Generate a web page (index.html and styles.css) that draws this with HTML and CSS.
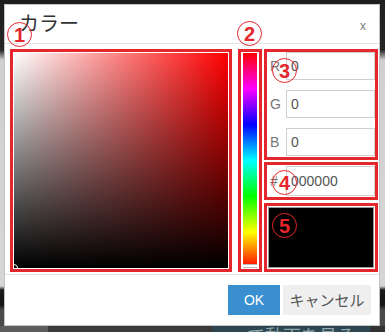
FILE: index.html
```
<!DOCTYPE html>
<html lang="ja">
<head>
<meta charset="utf-8">
<title>カラー</title>
<link rel="stylesheet" href="styles.css">
</head>
<body>
<div class="dialog">
  <div class="header">
    <span class="title">カラー</span>
    <span class="close">x</span>
  </div>
  <div class="content">
    <div class="picker">
      <div class="sat-frame mark">
        <div class="sat"><span class="sat-cursor"></span></div>
      </div>
      <div class="hue-frame mark">
        <div class="hue"><span class="hue-marker"></span></div>
      </div>
      <div class="side">
        <div class="rgb mark">
          <label class="row"><span class="lbl">R</span><input class="field" value="0"></label>
          <label class="row"><span class="lbl">G</span><input class="field" value="0"></label>
          <label class="row"><span class="lbl">B</span><input class="field" value="0"></label>
        </div>
        <div class="hex mark">
          <label class="row hex-row"><span class="lbl">#</span><input class="field" value="000000"></label>
        </div>
        <div class="preview-frame mark">
          <div class="preview"></div>
        </div>
      </div>
    </div>
  </div>
  <div class="footer">
    <button class="btn ok">OK</button>
    <button class="btn cancel">キャンセル</button>
  </div>
  <span class="badge b1">1</span>
  <span class="badge b2">2</span>
  <span class="badge b3">3</span>
  <span class="badge b4">4</span>
  <span class="badge b5">5</span>
</div>
<div class="below">
  <span class="seg s1"></span>
  <span class="seg s2"></span>
  <span class="seg s3">で動画を見る</span>
  <span class="seg s4"></span>
</div>
</body>
</html>
```
FILE: styles.css
```
html, body {
  margin: 0;
  padding: 0;
}
body {
  width: 385px;
  height: 332px;
  overflow: hidden;
  font-family: "Liberation Sans", "Noto Sans CJK JP", sans-serif;
  background: linear-gradient(to bottom,
    #1e1e1e 0, #262626 50px, #cfcfcf 60px, #d6d6d6 286px,
    #1a1a1a 290px, #151515 305px, #4a4a4a 310px, #4a4a4a 100%);
}

.dialog {
  position: relative;
  box-sizing: border-box;
  width: 376px;
  height: 322px;
  margin: 4px 0 0 4px;
  background: #fff;
  border: 1px solid #c4c4c4;
  display: flex;
  flex-direction: column;
}

.header {
  border-bottom: 1px solid #e5e5e5;
  display: flex;
  align-items: center;
  justify-content: space-between;
  padding: 0 13px 3px 14px;
  box-sizing: content-box;
  height: 35px;
}
.title {
  font-family: "Noto Sans CJK JP", sans-serif;
  font-size: 20px;
  line-height: 24px;
  color: #333;
}
.close {
  font-family: "Liberation Sans", sans-serif;
  font-size: 12px;
  line-height: 12px;
  color: #7a7a7a;
  margin-top: 6px;
}

.content {
  padding: 5px 1px 2px 5px;
}
.picker {
  display: flex;
  height: 223px;
}
.mark {
  box-sizing: border-box;
  border: 3px solid #e5262c;
  background: #fff;
}

.sat-frame {
  width: 222px;
  height: 223px;
  padding: 1px;
}
.sat {
  position: relative;
  width: 100%;
  height: 100%;
  overflow: hidden;
  background:
    linear-gradient(to top, #000, rgba(0,0,0,0)),
    linear-gradient(to right, #fff, #f00);
}
.sat-cursor {
  position: absolute;
  left: -4px;
  bottom: -4px;
  width: 6px;
  height: 6px;
  border: 1px solid #fff;
  border-radius: 50%;
}

.hue-frame {
  width: 24px;
  height: 223px;
  margin-left: 6px;
  padding: 1px 2px;
}
.hue {
  position: relative;
  width: 100%;
  height: 100%;
  background: linear-gradient(to bottom,
    #f00 0%, #f0f 16.6%, #00f 33.3%, #0ff 50%, #0f0 66.6%, #ff0 83.3%, #f00 100%);
}
.hue-marker {
  position: absolute;
  left: 0;
  right: 0;
  bottom: 0;
  height: 2px;
  background: #fff;
  border-top: 1px solid #bbb;
  border-bottom: 1px solid #bbb;
}

.side {
  width: 114px;
  margin-left: 2px;
  display: flex;
  flex-direction: column;
}
.rgb {
  height: 111px;
  display: grid;
  grid-template-rows: 28px 28px 28px;
  row-gap: 10px;
  padding-bottom: 1px;
}
.row {
  display: grid;
  grid-template-columns: 19px 1fr;
  align-items: center;
}
.lbl {
  padding-left: 3px;
  font-size: 14px;
  color: #777;
}
.field {
  box-sizing: border-box;
  width: 100%;
  min-width: 0;
  height: 28px;
  margin: 0;
  padding: 0 4px;
  border: 1px solid #cfcfcf;
  border-radius: 0;
  font-family: "Liberation Sans", sans-serif;
  font-size: 14px;
  color: #555;
  background: #fff;
  outline: none;
}

.hex {
  height: 38px;
  margin-top: 2px;
  padding: 1px 0;
}
.hex-row .field {
  height: 30px;
}

.preview-frame {
  height: 69px;
  margin-top: 3px;
  padding: 1px;
}
.preview {
  box-sizing: border-box;
  width: 100%;
  height: 100%;
  background: #000;
  border: 1px solid #9a9a9a;
}

.footer {
  border-top: 1px solid #e5e5e5;
  padding: 10px 8px 10px;
  display: flex;
  justify-content: flex-end;
  gap: 3px;
}
.btn {
  height: 30px;
  margin: 0;
  border: none;
  border-radius: 0;
  font-size: 14px;
  line-height: 30px;
  padding: 0;
}
.ok {
  width: 52px;
  background: #3a8fd0;
  color: #fff;
  font-family: "Liberation Sans", sans-serif;
}
.cancel {
  width: 88px;
  background: #efefef;
  color: #555;
  font-family: "Noto Sans CJK JP", sans-serif;
  font-size: 15px;
}

.badge {
  position: absolute;
  box-sizing: border-box;
  width: 25px;
  height: 25px;
  border: 1.5px solid #e5262c;
  border-radius: 50%;
  display: flex;
  align-items: center;
  justify-content: center;
  font-family: "Liberation Sans", sans-serif;
  font-weight: bold;
  font-size: 20px;
  line-height: 1;
  color: #e5262c;
}
.b1 { left: 2px; top: 17px; }
.b2 { left: 232px; top: 16px; }
.b3 { left: 267px; top: 53px; }
.b4 { left: 267px; top: 165px; }
.b5 { left: 267px; top: 208px; }

.below {
  display: flex;
  height: 6px;
  overflow: hidden;
}
.seg {
  display: block;
  height: 6px;
}
.s1 { width: 48px; background: #5d5d5d; }
.s2 { width: 165px; background: #3a3a3a; }
.s3 {
  width: 157px;
  background: #2c4751;
  color: #8fa6ad;
  font-family: "Noto Sans CJK JP", sans-serif;
  font-size: 18px;
  line-height: 18px;
  padding-left: 34px;
  box-sizing: border-box;
  white-space: nowrap;
  overflow: hidden;
}
.s4 { flex: 1; background: #333; }
```
